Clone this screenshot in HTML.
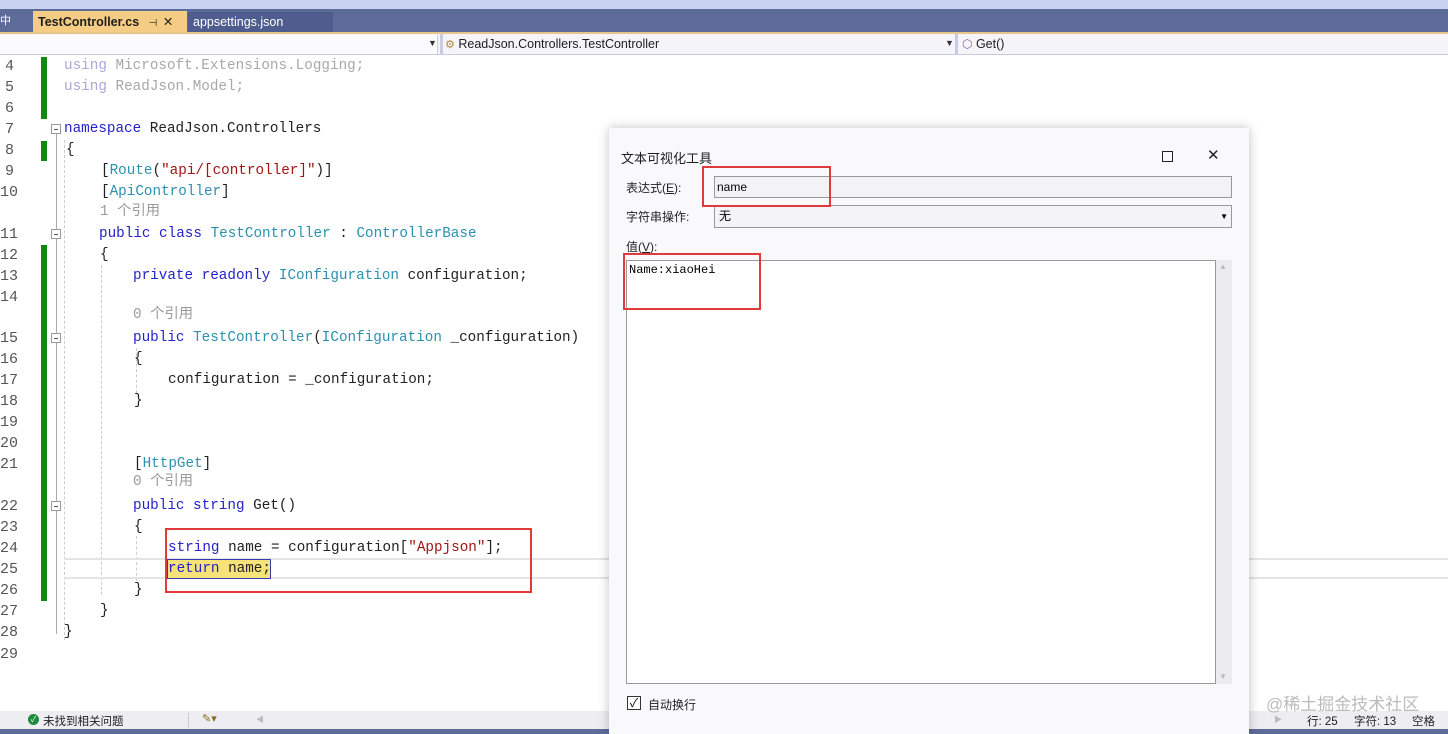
<!DOCTYPE html>
<html><head><meta charset="utf-8"><style>
*{margin:0;padding:0;box-sizing:border-box}
body{width:1448px;height:734px;overflow:hidden;background:#fff;position:relative;font-family:"Liberation Sans","Noto Sans CJK SC",sans-serif}
.a{position:absolute}
.ln{position:absolute;left:0;width:14px;text-align:right;font:15px "Liberation Mono","Noto Sans CJK SC",monospace;color:#2b91af;color:#555;height:21px;line-height:21px}
.c{position:absolute;white-space:pre;font:14.3px "Liberation Mono","Noto Sans CJK SC",monospace;height:21px;line-height:21px;color:#222}
.k{color:#2323c8}.t{color:#2b91af}.s{color:#a31515}.g{color:#999}.u{color:#a8a8d8}.ug{color:#a8a8a8}
.lens{font-family:"Liberation Mono","Noto Sans CJK SC",monospace;color:#999}
.box{position:absolute;border:2px solid #e03a3a}
.fold{position:absolute;left:51px;width:10px;height:10px;border:1px solid #999;background:#fff}
.fold:after{content:"";position:absolute;left:2px;top:4px;width:4px;height:1px;background:#555}
.dl{position:absolute;font-size:12px;color:#222}
</style></head><body>
<div class="a" style="left:0;top:0;width:1448px;height:9px;background:#c9d2ee"></div>
<div class="a" style="left:0;top:9px;width:1448px;height:24px;background:#5d6b99"></div>
<div class="a" style="left:0;top:12px;width:10px;height:20px;color:#fff;font-size:11px">中</div>
<div class="a" style="left:33px;top:11px;width:154px;height:22px;background:#f5cc84;font-size:12.5px;font-weight:bold;line-height:22px;padding-left:5px;color:#1e1e1e">TestController.cs <span style="font-weight:normal;font-size:10px;margin-left:6px">⊣</span> <span style="font-weight:normal;margin-left:2px">✕</span></div>
<div class="a" style="left:188px;top:12px;width:145px;height:21px;background:#4e5d8e;font-size:12.5px;line-height:21px;padding-left:5px;color:#fff">appsettings.json</div>
<div class="a" style="left:0;top:32px;width:1448px;height:2px;background:#e8c68a"></div>
<div class="a" style="left:0;top:34px;width:1448px;height:21px;background:#f4f4f9;border-bottom:1px solid #c8cce0"></div>
<div class="a" style="left:0;top:35px;width:438px;height:19px;background:#fbfbfe;border-right:1px solid #ccd"></div>
<div class="a" style="left:428px;top:38px;font-size:9px;color:#333">▼</div>
<div class="a" style="left:440px;top:34px;width:3px;height:21px;background:#c8cce0"></div>
<div class="a" style="left:445px;top:35px;font-size:12.5px;line-height:19px;color:#1e1e1e"><span style="color:#b08a2e;font-size:11px">⚙</span> ReadJson.Controllers.TestController</div>
<div class="a" style="left:945px;top:38px;font-size:9px;color:#333">▼</div>
<div class="a" style="left:955px;top:34px;width:3px;height:21px;background:#c8cce0"></div>
<div class="a" style="left:962px;top:35px;font-size:12.5px;line-height:19px;color:#1e1e1e"><span style="color:#8a5cc0;font-size:12px">⬡</span> Get()</div>

<!-- green bars -->
<div class="a" style="left:41px;top:57px;width:6px;height:62px;background:#128a12"></div>
<div class="a" style="left:41px;top:141px;width:6px;height:20px;background:#128a12"></div>
<div class="a" style="left:41px;top:245px;width:6px;height:356px;background:#128a12"></div>
<!-- fold lines -->
<div class="a" style="left:56px;top:134px;width:1px;height:500px;background:#aaa"></div>
<div class="a" style="left:64px;top:140px;width:0;height:500px;border-left:1px dashed #ccc"></div>
<div class="a" style="left:101px;top:265px;width:0;height:330px;border-left:1px dashed #ccc"></div>
<div class="a" style="left:136px;top:348px;width:0;height:45px;border-left:1px dashed #ccc"></div>
<div class="a" style="left:136px;top:536px;width:0;height:45px;border-left:1px dashed #ccc"></div>
<div class="fold" style="top:124px"></div><div class="fold" style="top:229px"></div><div class="fold" style="top:333px"></div><div class="fold" style="top:501px"></div>

<!-- current line -->
<div class="a" style="left:64px;top:558px;width:1384px;height:21px;border-top:2px solid #e4e4e4;border-bottom:2px solid #e4e4e4"></div>
<div class="a" style="left:167px;top:559px;width:104px;height:20px;background:#f5e37a;border:1px solid #3a3ab0"></div>

<div class="ln" style="top:56px">4</div><div class="ln" style="top:77px">5</div><div class="ln" style="top:98px">6</div><div class="ln" style="top:119px">7</div><div class="ln" style="top:140px">8</div><div class="ln" style="top:161px">9</div><div class="ln" style="top:182px">10</div><div class="ln" style="top:224px">11</div><div class="ln" style="top:245px">12</div><div class="ln" style="top:266px">13</div><div class="ln" style="top:287px">14</div><div class="ln" style="top:328px">15</div><div class="ln" style="top:349px">16</div><div class="ln" style="top:370px">17</div><div class="ln" style="top:391px">18</div><div class="ln" style="top:412px">19</div><div class="ln" style="top:433px">20</div><div class="ln" style="top:454px">21</div><div class="ln" style="top:496px">22</div><div class="ln" style="top:517px">23</div><div class="ln" style="top:538px">24</div><div class="ln" style="top:559px">25</div><div class="ln" style="top:580px">26</div><div class="ln" style="top:601px">27</div><div class="ln" style="top:622px">28</div><div class="ln" style="top:644px">29</div>

<div class="c" style="left:64px;top:56px"><span class="u">using</span> <span class="ug">Microsoft.Extensions.Logging;</span></div>
<div class="c" style="left:64px;top:77px"><span class="u">using</span> <span class="ug">ReadJson.Model;</span></div>
<div class="c" style="left:64px;top:119px"><span class="k">namespace</span> ReadJson.Controllers</div>
<div class="c" style="left:66px;top:140px">{</div>
<div class="c" style="left:101px;top:161px"><span>[</span><span class="t">Route</span>(<span class="s">"api/[controller]"</span>)]</div>
<div class="c" style="left:101px;top:182px">[<span class="t">ApiController</span>]</div>
<div class="c lens" style="left:100px;top:202px">1 个引用</div>
<div class="c" style="left:99px;top:224px"><span class="k">public class</span> <span class="t">TestController</span> : <span class="t">ControllerBase</span></div>
<div class="c" style="left:100px;top:245px">{</div>
<div class="c" style="left:133px;top:266px"><span class="k">private readonly</span> <span class="t">IConfiguration</span> configuration;</div>
<div class="c lens" style="left:133px;top:305px">0 个引用</div>
<div class="c" style="left:133px;top:328px"><span class="k">public</span> <span class="t">TestController</span>(<span class="t">IConfiguration</span> _configuration)</div>
<div class="c" style="left:134px;top:349px">{</div>
<div class="c" style="left:168px;top:370px">configuration = _configuration;</div>
<div class="c" style="left:134px;top:391px">}</div>
<div class="c" style="left:134px;top:454px">[<span class="t">HttpGet</span>]</div>
<div class="c lens" style="left:133px;top:472px">0 个引用</div>
<div class="c" style="left:133px;top:496px"><span class="k">public string</span> Get()</div>
<div class="c" style="left:134px;top:517px">{</div>
<div class="c" style="left:168px;top:538px"><span class="k">string</span> name = configuration[<span class="s">"Appjson"</span>];</div>
<div class="c" style="left:168px;top:559px"><span class="k">return</span> name;</div>
<div class="c" style="left:134px;top:580px">}</div>
<div class="c" style="left:100px;top:601px">}</div>
<div class="c" style="left:64px;top:622px">}</div>
<div class="box" style="left:165px;top:528px;width:367px;height:65px"></div>

<!-- status -->
<div class="a" style="left:0;top:711px;width:1448px;height:18px;background:#eeeef2"></div>
<div class="a" style="left:0;top:729px;width:1448px;height:5px;background:#5d6b99"></div>
<div class="a" style="left:28px;top:714px;width:11px;height:11px;border-radius:50%;background:#1e8a3a;color:#fff;font-size:8px;text-align:center;line-height:11px">✓</div>
<div class="a" style="left:43px;top:713px;font-size:11.5px;color:#1e1e1e">未找到相关问题</div>
<div class="a" style="left:188px;top:713px;width:1px;height:15px;background:#ccc"></div>
<div class="a" style="left:202px;top:712px;font-size:11px;color:#8a6a20">✎▾</div>
<div class="a" style="left:256px;top:714px;font-size:8px;color:#bbb">◀</div>
<div class="a" style="left:1274px;top:714px;font-size:8px;color:#bbb">▶</div>
<div class="a" style="left:1307px;top:713px;font-size:11.5px;color:#1e1e1e">行: 25</div>
<div class="a" style="left:1354px;top:713px;font-size:11.5px;color:#1e1e1e">字符: 13</div>
<div class="a" style="left:1412px;top:713px;font-size:11.5px;color:#1e1e1e">空格</div>
<div class="a" style="left:1266px;top:690px;font-size:17px;color:#bbb">@稀土掘金技术社区</div>

<!-- dialog -->
<div class="a" style="left:609px;top:128px;width:640px;height:606px;background:#f9f9fb;box-shadow:0 0 10px rgba(0,0,0,.25)"></div>
<div class="a" style="left:621px;top:148px;font-size:13px;color:#1e1e1e">文本可视化工具</div>
<div class="a" style="left:1162px;top:151px;width:11px;height:11px;border:1.3px solid #222"></div>
<div class="a" style="left:1207px;top:146px;font-size:15px;color:#222">✕</div>
<div class="dl" style="left:626px;top:179px">表达式(<u>E</u>):</div>
<div class="a" style="left:714px;top:176px;width:518px;height:22px;border:1px solid #999;background:#f3f3f6;font-size:12px;line-height:20px;padding-left:2px">name</div>
<div class="dl" style="left:626px;top:208px">字符串操作:</div>
<div class="a" style="left:714px;top:205px;width:518px;height:23px;border:1px solid #999;background:#f4f4f7;font-size:12px;line-height:21px;padding-left:4px">无<span style="position:absolute;right:3px;font-size:8px">▼</span></div>
<div class="dl" style="left:626px;top:238px">值(<u>V</u>):</div>
<div class="a" style="left:626px;top:260px;width:590px;height:424px;border:1px solid #999;background:#fff;font:12px 'Liberation Mono',monospace;padding:2px 0 0 2px">Name:xiaoHei</div>
<div class="a" style="left:1216px;top:260px;width:16px;height:424px;background:#ececef"></div>
<div class="a" style="left:1219px;top:262px;font-size:8px;color:#bbb">▲</div>
<div class="a" style="left:1219px;top:672px;font-size:8px;color:#bbb">▼</div>
<div class="a" style="left:627px;top:696px;width:14px;height:14px;border:1px solid #333;background:#fff;font-size:12px;line-height:12px;text-align:center">✓</div>
<div class="dl" style="left:648px;top:696px">自动换行</div>
<div class="box" style="left:702px;top:166px;width:129px;height:41px"></div>
<div class="box" style="left:623px;top:253px;width:138px;height:57px"></div>
</body></html>
